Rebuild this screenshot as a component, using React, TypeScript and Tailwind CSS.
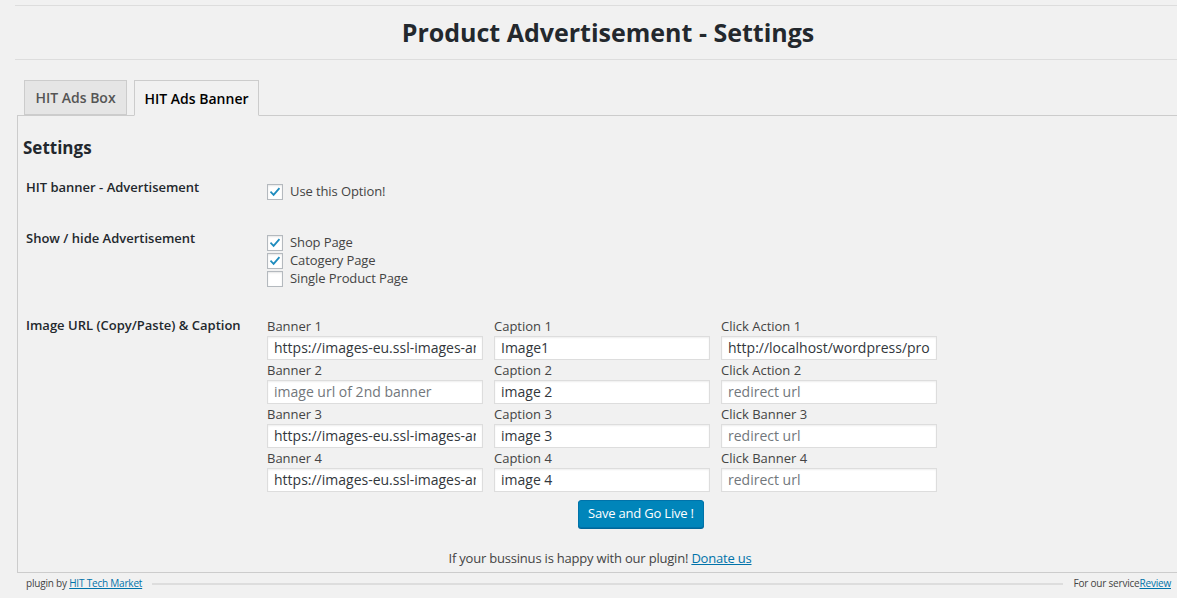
import React from "react";

const rows = [
  { banner: "Banner 1", bannerVal: "https://images-eu.ssl-images-amazon.com/images/G/31/img17/banner.jpg", bannerPh: "", cap: "Caption 1", capVal: "Image1", click: "Click Action 1", clickVal: "http://localhost/wordpress/product/sample" },
  { banner: "Banner 2", bannerVal: "", bannerPh: "image url of 2nd banner", cap: "Caption 2", capVal: "image 2", click: "Click Action 2", clickVal: "" },
  { banner: "Banner 3", bannerVal: "https://images-eu.ssl-images-amazon.com/images/G/31/img17/banner3.jpg", bannerPh: "", cap: "Caption 3", capVal: "image 3", click: "Click Banner 3", clickVal: "" },
  { banner: "Banner 4", bannerVal: "https://images-eu.ssl-images-amazon.com/images/G/31/img17/banner4.jpg", bannerPh: "", cap: "Caption 4", capVal: "image 4", click: "Click Banner 4", clickVal: "" },
];

function Check({ checked, label }: { checked: boolean; label: string }) {
  return (
    <label className="flex h-[18px] items-center gap-[7px] pt-px text-[13px] tracking-[-0.1px] text-[#444]">
      <span className="flex h-[16px] w-[16px] items-center justify-center border border-[#b4b9be] bg-white shadow-[inset_0_1px_2px_rgba(0,0,0,0.1)]">
        {checked && (
          <svg viewBox="0 0 20 20" className="h-[16px] w-[16px]">
            <path d="M4.5 10.5l3.5 3.5 7.5-8.5" fill="none" stroke="#1e8cbe" strokeWidth="2.6" strokeLinecap="square" />
          </svg>
        )}
      </span>
      {label}
    </label>
  );
}

function Field({ label, value, ph }: { label: string; value: string; ph: string }) {
  return (
    <div className="w-[216px]">
      <div className="h-[20px] text-[13px] leading-[20px] text-[#444]">{label}</div>
      <input
        readOnly
        value={value}
        placeholder={ph}
        className="block h-[24px] w-[216px] border border-[#ddd] bg-white px-[6px] pb-px text-[14px] text-[#32373c] placeholder:text-[#72777c] shadow-[inset_0_1px_2px_rgba(0,0,0,0.07)] outline-none"
      />
    </div>
  );
}

export default function App() {
  return (
    <div className="min-h-screen bg-[#f1f1f1] pt-[5px] font-['Open_Sans',sans-serif] text-[#23282d]">
      <div className="ml-[15px] flex h-[55px] items-center justify-center border-y border-[#ddd] pl-[24px]">
        <h1 className="text-[25px] font-bold leading-none text-[#23282d]">Product Advertisement - Settings</h1>
      </div>

      <div className="ml-[17px] mt-[20px]">
        <div className="relative z-10 -mb-px flex gap-[7px] pl-[7px]">
          <div className="flex h-[35px] w-[103px] items-center justify-center border border-[#ccc] bg-[#e5e5e5] text-[14px] font-semibold text-[#555]">
            HIT Ads Box
          </div>
          <div className="flex h-[36px] w-[125px] items-center justify-center border border-b-[#f1f1f1] border-[#ccc] bg-[#f1f1f1] text-[14px] font-semibold text-black">
            HIT Ads Banner
          </div>
        </div>

        <div className="border-y border-l border-[#ccc] pb-[4px] pl-[5px]">
          <h2 className="mt-[20px] text-[17px] font-bold leading-[23px] text-[#23282d]">Settings</h2>

          <div className="mt-[19px] flex">
            <div className="w-[244px] pl-[3px] text-[13px] font-semibold leading-[18px]">HIT banner - Advertisement</div>
            <div className="pt-[4px]">
              <Check checked label="Use this Option!" />
            </div>
          </div>

          <div className="mt-[29px] flex">
            <div className="w-[244px] pl-[3px] text-[13px] font-semibold leading-[18px]">Show / hide Advertisement</div>
            <div className="pt-[4px]">
              <Check checked label="Shop Page" />
              <Check checked label="Catogery Page" />
              <Check checked={false} label="Single Product Page" />
            </div>
          </div>

          <div className="mt-[29px] flex">
            <div className="w-[244px] pl-[3px] text-[13px] font-semibold leading-[18px]">Image URL (Copy/Paste) &amp; Caption</div>
            <div>
              {rows.map((r) => (
                <div key={r.banner} className="flex gap-[11px]">
                  <Field label={r.banner} value={r.bannerVal} ph={r.bannerPh} />
                  <Field label={r.cap} value={r.capVal} ph="" />
                  <Field label={r.click} value={r.clickVal} ph="redirect url" />
                </div>
              ))}
              <button className="ml-[311px] mt-[8px] h-[28px] rounded-[3px] border border-[#0073aa] bg-[#0085ba] px-[9px] text-[13px] tracking-[-0.2px] text-white shadow-[0_1px_0_#006799]">
                Save and Go Live !
              </button>
            </div>
          </div>

          <p className="mt-[20px] text-center text-[13px] leading-[20px] tracking-[-0.2px] text-[#444]">
            If your bussinus is happy with our plugin!{" "}
            <a className="text-[#0073aa] underline">Donate us</a>
          </p>
        </div>
      </div>

      <div className="flex items-center pl-[26px] pr-[6px] pt-[3px] text-[10px] tracking-[-0.2px] text-[#444]">
        <span>
          plugin by <a className="text-[#0073aa] underline">HIT Tech Market</a>
        </span>
        <span className="mx-[10px] flex-1 border-t-2 border-[#ddd]" />
        <span>
          For our service<a className="text-[#0073aa] underline">Review</a>
        </span>
      </div>
    </div>
  );
}
